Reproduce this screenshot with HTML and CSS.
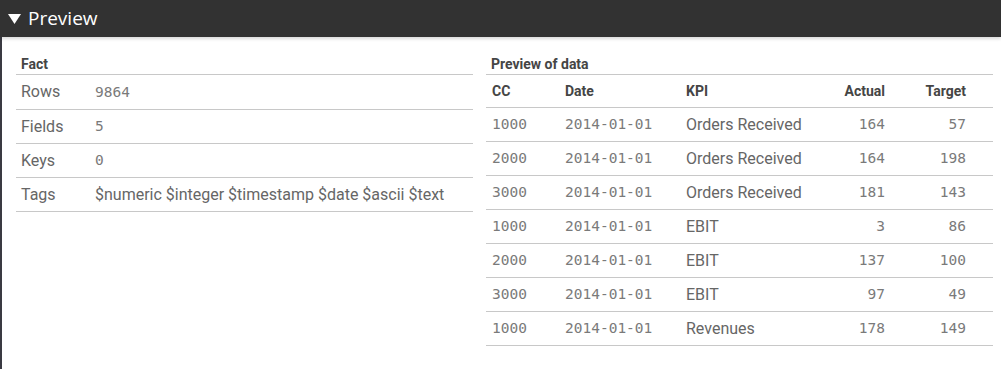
FILE: index.html
```html
<!DOCTYPE html>
<html lang="en">
<head>
  <meta charset="UTF-8" />
  <title>Preview</title>
  <link rel="stylesheet" href="styles.css">
</head>
<body>

  <!-- Section header -->
  <div class="section-head">
    <svg class="caret" width="13" height="10" viewBox="0 0 13 10"><polygon points="0,0 13,0 6.5,10" fill="#fff"/></svg>
    <span>Preview</span>
  </div>

  <div class="panel">

    <!-- Fact table -->
    <div class="block fact">
      <div class="block-title">Fact</div>
      <table class="kv">
        <tr><td class="key">Rows</td><td class="num">9864</td></tr>
        <tr><td class="key">Fields</td><td class="num">5</td></tr>
        <tr><td class="key">Keys</td><td class="num">0</td></tr>
        <tr><td class="key">Tags</td><td>$numeric $integer $timestamp $date $ascii $text</td></tr>
      </table>
    </div>

    <!-- Data preview -->
    <div class="block data">
      <div class="block-title">Preview of data</div>
      <table class="grid">
        <colgroup>
          <col style="width:73px"><col style="width:121px"><col style="width:129px"><col style="width:82px"><col style="width:102px">
        </colgroup>
        <thead>
          <tr><th>CC</th><th>Date</th><th>KPI</th><th class="r">Actual</th><th class="r last">Target</th></tr>
        </thead>
        <tbody id="rows"></tbody>
      </table>
    </div>

  </div>

  <script>
    const data = [
      ["1000", "2014-01-01", "Orders Received", 164, 57],
      ["2000", "2014-01-01", "Orders Received", 164, 198],
      ["3000", "2014-01-01", "Orders Received", 181, 143],
      ["1000", "2014-01-01", "EBIT", 3, 86],
      ["2000", "2014-01-01", "EBIT", 137, 100],
      ["3000", "2014-01-01", "EBIT", 97, 49],
      ["1000", "2014-01-01", "Revenues", 178, 149]
    ];

    const tbody = document.getElementById("rows");
    data.forEach(row => {
      const tr = document.createElement("tr");
      tr.innerHTML = `
        <td class="num">${row[0]}</td>
        <td class="num">${row[1]}</td>
        <td>${row[2]}</td>
        <td class="num r">${row[3]}</td>
        <td class="num r last">${row[4]}</td>
      `;
      tbody.appendChild(tr);
    });
  </script>

</body>
</html>
```

FILE: styles.css
```css
* { margin: 0; padding: 0; box-sizing: border-box; }
body { font-family: Roboto, 'Liberation Sans', sans-serif; background: #fff; color: #666; }

.section-head { height: 37px; background: #323232; color: #fff; display: flex; align-items: center; gap: 7px; padding-left: 8px; box-shadow: 0 2px 3px rgba(0,0,0,0.15); position: relative; }
.section-head span { font-family: 'Open Sans', sans-serif; font-size: 19px; line-height: 1; }
.caret { margin-top: 1px; }

.panel { display: flex; gap: 13px; padding: 14px 8px 0 14px; border-left: 2px solid #3a3a42; height: 332px; }
.block.fact { width: 457px; }
.block.data { width: 507px; }

.block-title { font-size: 14px; font-weight: bold; color: #454545; height: 24px; line-height: 26px; padding-left: 5px; border-bottom: 1px solid #c8c8c8; }

table { border-collapse: collapse; width: 100%; table-layout: fixed; }
td, th { height: 34px; border-bottom: 1px solid #c8c8c8; font-size: 16px; text-align: left; vertical-align: middle; white-space: nowrap; }

.kv td { padding-left: 5px; }
.kv .key { width: 74px; }

.grid th { height: 32px; font-size: 14px; font-weight: bold; color: #454545; padding-left: 6px; }
.grid td { padding-left: 6px; }
.grid .r { text-align: right; padding-right: 6px; }
.grid .last { padding-right: 27px; }

.num { font-family: 'DejaVu Sans Mono', monospace; font-size: 14.5px; color: #7a7a7a; }
```
